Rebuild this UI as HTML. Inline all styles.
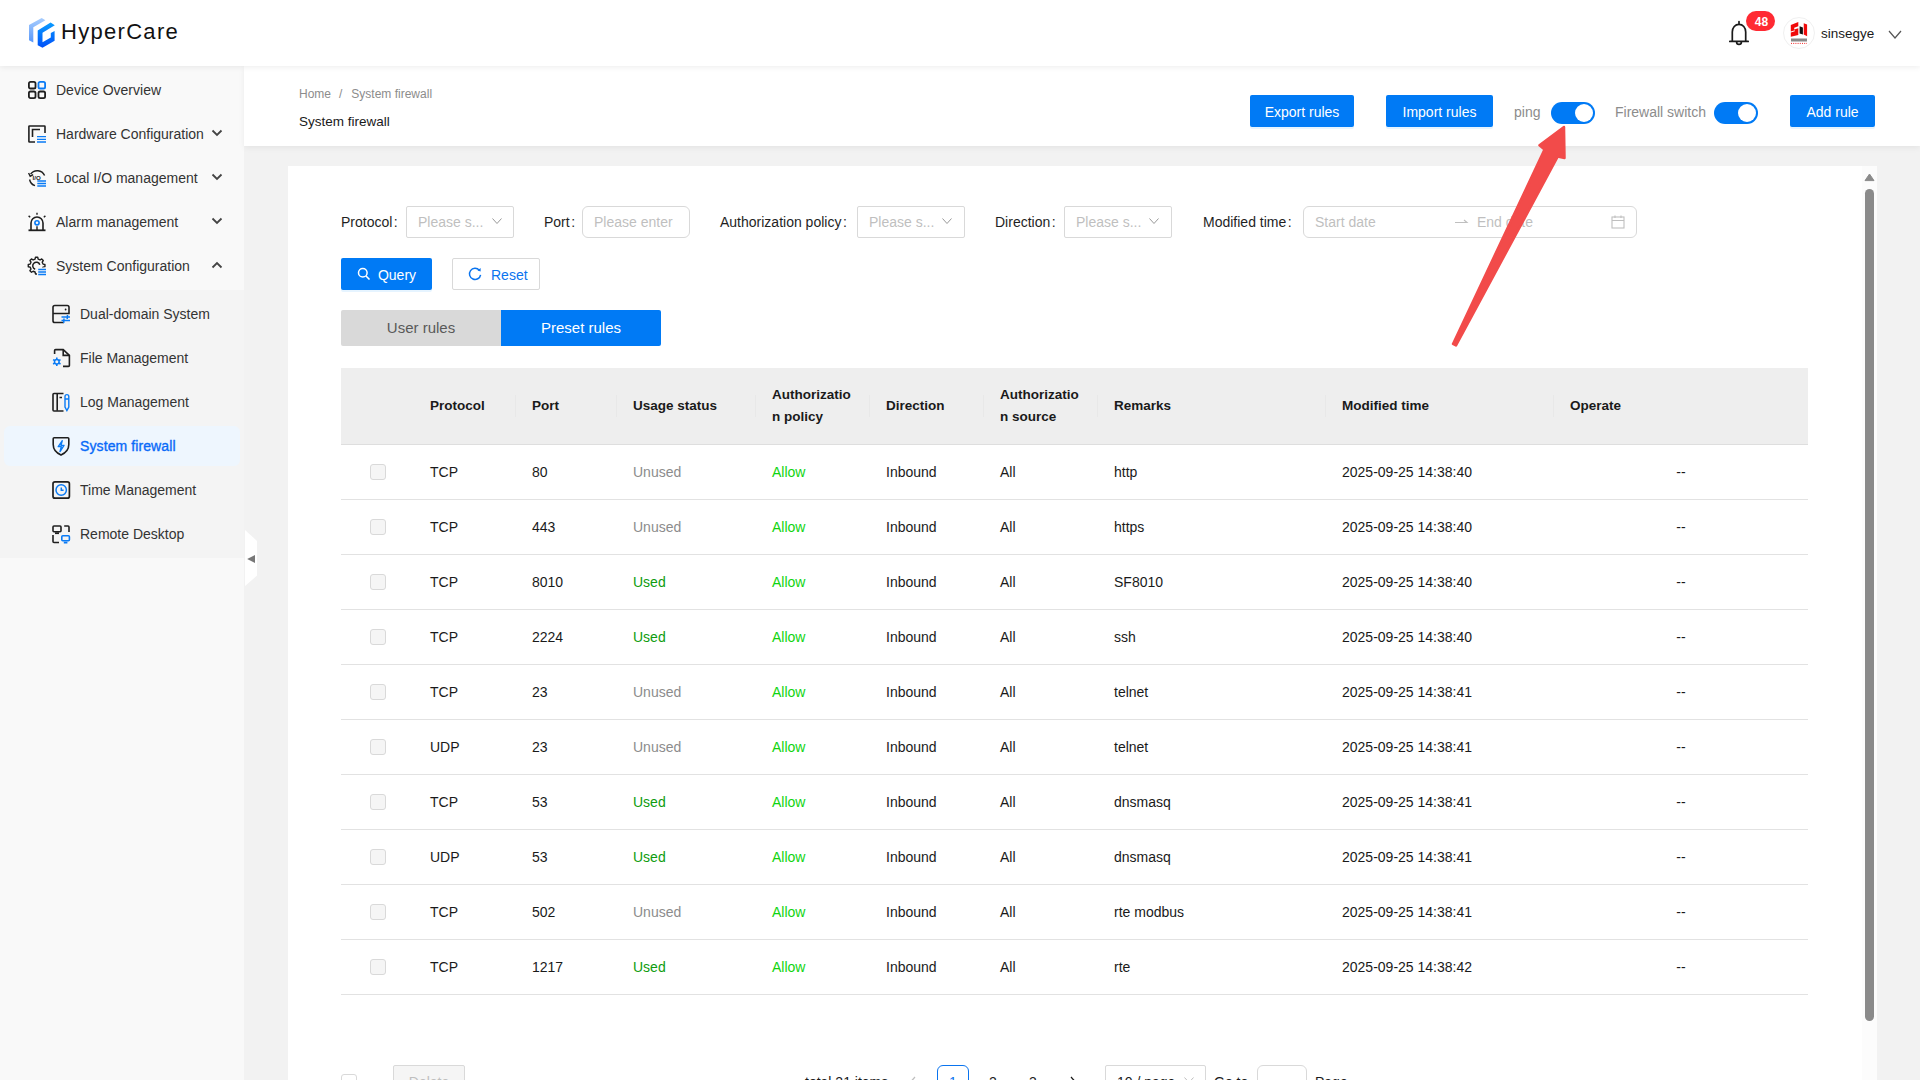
<!DOCTYPE html>
<html><head><meta charset="utf-8">
<style>
*{box-sizing:border-box;margin:0;padding:0}
html,body{width:1920px;height:1080px;overflow:hidden;background:#f2f2f2;font-family:"Liberation Sans",sans-serif;font-size:14px;color:#1f1f1f}
.abs{position:absolute}
#hdr{position:absolute;left:0;top:0;width:1920px;height:66px;background:#fff;box-shadow:0 1px 6px rgba(0,0,0,.08);z-index:5}
#side{position:absolute;left:0;top:66px;width:244px;height:1014px;background:#f9f9f9}
#sub{position:absolute;left:0;top:290px;width:244px;height:268px;background:#f4f4f4}
.mi{position:absolute;left:56px;height:20px;line-height:20px;font-size:14px;color:#333;white-space:nowrap}
.chev{position:absolute;left:211px;width:12px;height:8px}
#ph{position:absolute;left:244px;top:66px;width:1676px;height:80px;background:#fff;box-shadow:0 2px 6px rgba(0,0,0,.06);z-index:2}
#card{position:absolute;left:288px;top:166px;width:1588px;height:914px;background:#fff}
.btn{position:absolute;height:32px;line-height:34px;background:#007af5;color:#fff;text-align:center;border-radius:2px;font-size:14px;box-shadow:0 2px 0 rgba(5,145,255,.1)}
.lbl{position:absolute;height:20px;line-height:20px;color:#1f1f1f;white-space:nowrap}
.inp{position:absolute;height:32px;border:1px solid #d9d9d9;border-radius:2px;background:#fff;color:#bfbfbf;line-height:30px;padding-left:11px;white-space:nowrap}
.tog{position:absolute;width:44px;height:22px;border-radius:11px;background:#007af5}
.tog::after{content:"";position:absolute;right:2px;top:2px;width:18px;height:18px;border-radius:50%;background:#fff}
table{border-collapse:collapse}
.th{position:absolute;top:368px;height:76px;font-weight:bold;color:#1f1f1f;line-height:22px;display:flex;align-items:center}
.row{position:absolute;left:341px;width:1467px;height:55px;border-bottom:1px solid #e4e4e4}
.c{position:absolute;top:0;height:54px;line-height:54px;white-space:nowrap}
.cb{position:absolute;left:29px;top:19px;width:16px;height:16px;border:1px solid #d9d9d9;border-radius:3px;background:#f7f7f7}
</style></head><body>
<div id="hdr">
<svg class="abs" style="left:0;top:0" width="60" height="60" viewBox="0 0 60 60">
<defs><linearGradient id="lg1" x1="0" y1="0" x2="0" y2="1"><stop offset="0" stop-color="#a8cdfd"/><stop offset="1" stop-color="#5797fa"/></linearGradient>
<linearGradient id="lg2" x1="0" y1="0" x2="0" y2="1"><stop offset="0" stop-color="#0a9cff"/><stop offset="1" stop-color="#0050f8"/></linearGradient></defs>
<path d="M29,25 L41.7,18 L45.4,20.2 L33.3,27.3 L33.3,42.5 L29,40.3 Z" fill="url(#lg1)"/>
<path d="M37.7,30.4 L50.6,22.5 L54.8,25.2 L42.5,32.8 L42.5,42.3 L50.8,37.5 L50.8,32.9 L54.6,30.9 L54.6,40.8 L42.5,47.7 L37.7,45.2 Z" fill="url(#lg2)"/>
</svg>
<div class="abs" style="left:61px;top:17.7px;font-size:22px;line-height:28px;color:#111;letter-spacing:1.3px">HyperCare</div>
<svg class="abs" style="left:1726.5px;top:20px" width="24" height="28" viewBox="0 0 24 28"><path d="M12,1.5 L12,4 M5.3,21 L5.3,12 C5.3,7.5 8.2,4.3 12,4.3 C15.8,4.3 18.7,7.5 18.7,12 L18.7,21 M2.8,21.4 L21.2,21.4 M9.6,22 C9.6,25.2 14.4,25.2 14.4,22" fill="none" stroke="#1a1a1a" stroke-width="1.7" stroke-linecap="round"/></svg>
<div class="abs" style="left:1746px;top:11px;width:29px;height:20px;border-radius:10px;background:#ff2a33;color:#fff;font-size:12px;font-weight:bold;line-height:22px;text-align:center;padding-left:2px">48</div>
<div class="abs" style="left:1783px;top:17px;width:32px;height:32px;border-radius:50%;border:1px solid #f0f0f0;background:#fff"></div>
<svg class="abs" style="left:1790px;top:21px" width="18" height="24" viewBox="0 0 18 24"><path d="M0.8,4 L8.3,1.1 L8.3,5.3 L4.2,6.7 L4.2,8.4 L8.3,7.2 L8.3,13.9 L0.8,15.7 L0.8,11.4 L4.8,10.3 L4.8,9.2 L0.8,10.4 Z" fill="#f00a0a"/><path d="M9.6,5.2 L12.9,6.5 L12.9,13.6 L9.6,12.5 Z" fill="#111"/><path d="M13.75,2.3 L17.1,3.6 L17.1,15.25 L13.75,13.5 Z" fill="#f00a0a"/><rect x="1" y="17.5" width="16" height="3" fill="#555" opacity="0.7"/><path d="M1,22.4 L17,22.4" stroke="#f00a0a" stroke-width="0.9" stroke-dasharray="1,1.2"/></svg>
<div class="abs" style="left:1821px;top:24px;font-size:13.5px;line-height:20px;color:#1a1a1a">sinsegye</div>
<svg class="abs" style="left:1887px;top:29px" width="16" height="12" viewBox="0 0 16 12"><path d="M2,2 L8,9 L14,2" fill="none" stroke="#555" stroke-width="1.2"/></svg>
</div>
<div id="side"></div>
<div id="sub"></div>
<div class="abs" style="left:4px;top:426px;width:236px;height:40px;border-radius:6px;background:#eef6fe"></div>
<svg class="abs" style="left:27px;top:80px" width="20" height="20" viewBox="0 0 20 20" fill="none" stroke-width="1.8">
<rect x="1.9" y="1.9" width="6.6" height="6.6" rx="1.6" stroke="#1f1f1f"/><rect x="11.5" y="1.9" width="6.6" height="6.6" rx="1.6" stroke="#0a7bf5"/>
<rect x="1.9" y="11.5" width="6.6" height="6.6" rx="1.6" stroke="#1f1f1f"/><rect x="11.5" y="11.5" width="6.6" height="6.6" rx="1.6" stroke="#1f1f1f"/></svg>
<svg class="abs" style="left:27px;top:124px" width="20" height="20" viewBox="0 0 20 20" fill="none">
<path d="M8,18 L2.5,18 Q1.9,18 1.9,17.4 L1.9,2.6 Q1.9,2 2.5,2 L17.4,2 Q18,2 18,2.6 L18,9" stroke="#1f1f1f" stroke-width="1.6"/>
<path d="M5.5,13 L5.5,5.5 L13,5.5" stroke="#1f1f1f" stroke-width="1.6"/>
<path d="M10,12.6 L19,12.6 M10,15.3 L19,15.3 M10,18 L19,18" stroke="#0a7bf5" stroke-width="1.3"/></svg>
<svg class="abs" style="left:27px;top:168px" width="20" height="20" viewBox="0 0 20 20" fill="none">
<path d="M3.6,6.2 A8,8 0 0 1 17.6,7.6" stroke="#1f1f1f" stroke-width="1.4"/><path d="M1.6,5 L3.2,8.2 L6.2,6.6" stroke="#1f1f1f" stroke-width="1.4"/>
<path d="M2.6,11.5 A8,8 0 0 0 8,17.6" stroke="#1f1f1f" stroke-width="1.4"/>
<text x="5.6" y="11.8" font-size="6.2" font-family="Liberation Sans" font-weight="bold" fill="#1f1f1f">I/O</text>
<path d="M10.3,13 L19,13 M10.3,15.5 L19,15.5 M10.3,18 L19,18" stroke="#0a7bf5" stroke-width="1.3"/></svg>
<svg class="abs" style="left:27px;top:212px" width="20" height="20" viewBox="0 0 20 20" fill="none">
<path d="M4,18.2 L4,11 A6,6 0 0 1 16,11 L16,18.2" stroke="#1f1f1f" stroke-width="1.6"/><path d="M1.5,18.3 L18.5,18.3" stroke="#1f1f1f" stroke-width="1.8"/>
<path d="M10,0.8 L10,2.8 M1.6,3.9 L3.2,5.3 M18.4,3.9 L16.8,5.3 M10,14.2 L10,18" stroke="#1f1f1f" stroke-width="1.4"/>
<circle cx="10" cy="10.8" r="2.1" stroke="#0a7bf5" stroke-width="1.6"/></svg>
<svg class="abs" style="left:27px;top:256px" width="20" height="20" viewBox="0 0 20 20" fill="none">
<defs><mask id="gm"><rect x="0" y="0" width="20" height="20" fill="#fff"/><rect x="10" y="11.5" width="10" height="9" fill="#000"/></mask></defs>
<path mask="url(#gm)" d="M8.06,3.18 L8.48,1.27 L10.72,1.27 L11.14,3.18 L13.05,3.97 L14.70,2.92 L16.28,4.50 L15.23,6.15 L16.02,8.06 L17.93,8.48 L17.93,10.72 L16.02,11.14 L15.23,13.05 L16.28,14.70 L14.70,16.28 L13.05,15.23 L11.14,16.02 L10.72,17.93 L8.48,17.93 L8.06,16.02 L6.15,15.23 L4.50,16.28 L2.92,14.70 L3.97,13.05 L3.18,11.14 L1.27,10.72 L1.27,8.48 L3.18,8.06 L3.97,6.15 L2.92,4.50 L4.50,2.92 L6.15,3.97 Z" stroke="#1f1f1f" stroke-width="1.4" stroke-linejoin="round"/>
<path d="M8.2,13.2 A3.6,3.6 0 1 1 12.8,8.8" stroke="#1f1f1f" stroke-width="1.5"/>
<path d="M11.2,13.5 L19,13.5 M11.2,16 L19,16 M11.2,18.5 L19,18.5" stroke="#0a7bf5" stroke-width="1.3"/></svg>
<div class="mi" style="top:80px">Device Overview</div>
<div class="mi" style="top:124px">Hardware Configuration</div>
<svg class="abs" style="left:210px;top:128px" width="14" height="10" viewBox="0 0 14 10"><path d="M2.5,2.5 L7,7 L11.5,2.5" fill="none" stroke="#444" stroke-width="1.8"/></svg>
<div class="mi" style="top:168px">Local I/O management</div>
<svg class="abs" style="left:210px;top:172px" width="14" height="10" viewBox="0 0 14 10"><path d="M2.5,2.5 L7,7 L11.5,2.5" fill="none" stroke="#444" stroke-width="1.8"/></svg>
<div class="mi" style="top:212px">Alarm management</div>
<svg class="abs" style="left:210px;top:216px" width="14" height="10" viewBox="0 0 14 10"><path d="M2.5,2.5 L7,7 L11.5,2.5" fill="none" stroke="#444" stroke-width="1.8"/></svg>
<div class="mi" style="top:256px">System Configuration</div>
<svg class="abs" style="left:210px;top:260px" width="14" height="10" viewBox="0 0 14 10"><path d="M2.5,7.5 L7,3 L11.5,7.5" fill="none" stroke="#444" stroke-width="1.8"/></svg>
<svg class="abs" style="left:51px;top:304px" width="20" height="20" viewBox="0 0 20 20" fill="none">
<path d="M13,18.5 L3.8,18.5 Q2,18.5 2,16.7 L2,3.3 Q2,1.5 3.8,1.5 L16.2,1.5 Q18,1.5 18,3.3 L18,9.5 L2,9.5" stroke="#1f1f1f" stroke-width="1.6"/>
<circle cx="14.6" cy="5.5" r="0.9" fill="#1f1f1f"/>
<path d="M10.5,13 L19,13 M10.5,16.5 L19,16.5 M16.5,11 L16.2,15 M13,14.5 L12.7,19" stroke="#0a7bf5" stroke-width="1.5"/></svg>
<svg class="abs" style="left:51px;top:348px" width="20" height="20" viewBox="0 0 20 20" fill="none">
<path d="M3.6,6 L3.6,2.6 Q3.6,1.6 4.6,1.6 L12.2,1.6 L18.4,7.4 L18.4,17.4 Q18.4,18.4 17.4,18.4 L12,18.4" stroke="#1f1f1f" stroke-width="1.6"/>
<path d="M12.2,1.8 L12.2,7.4 L18.2,7.4" stroke="#1f1f1f" stroke-width="1.6"/>
<circle cx="5.8" cy="13.8" r="2.3" stroke="#0a7bf5" stroke-width="1.5"/>
<path d="M5.80,16.10 L5.80,18.10 M3.81,14.95 L2.08,15.95 M3.81,12.65 L2.08,11.65 M5.80,11.50 L5.80,9.50 M7.79,12.65 L9.52,11.65 M7.79,14.95 L9.52,15.95" stroke="#0a7bf5" stroke-width="1.6"/></svg>
<svg class="abs" style="left:51px;top:392px" width="20" height="20" viewBox="0 0 20 20" fill="none">
<path d="M12.5,19 L3,19 Q2,19 2,18 L2,2.5 Q2,1.5 3,1.5 L12.5,1.5" stroke="#1f1f1f" stroke-width="1.6"/>
<path d="M6.2,1.8 L6.2,18.8 M8.5,5.5 L11,5.5" stroke="#1f1f1f" stroke-width="1.6"/>
<path d="M14,4.5 A1.9,1.9 0 0 1 17.8,4.5 L17.8,15 L15.9,18.5 L14,15 Z M14,7 L17.8,7" stroke="#0a7bf5" stroke-width="1.4"/></svg>
<svg class="abs" style="left:51px;top:436px" width="20" height="20" viewBox="0 0 20 20" fill="none">
<path d="M2.2,2.8 Q2.2,1.8 3.2,1.8 L16.8,1.8 Q17.8,1.8 17.8,2.8 L17.8,8.5 Q17.8,15.5 10,19 Q2.2,15.5 2.2,8.5 Z" stroke="#1f1f1f" stroke-width="1.6"/>
<path d="M11.2,4.8 L7.2,10.6 L10.3,10.6 L9,15.6 L13,9.4 L10,9.4 Z" stroke="#0a7bf5" stroke-width="1.4" stroke-linejoin="round"/></svg>
<svg class="abs" style="left:51px;top:480px" width="20" height="20" viewBox="0 0 20 20" fill="none">
<rect x="2" y="1.8" width="16.4" height="16.4" rx="2" stroke="#1f1f1f" stroke-width="1.7"/>
<circle cx="10.2" cy="10" r="5.2" stroke="#0a7bf5" stroke-width="1.5"/>
<path d="M10.3,7.5 L10.3,10.2 L12.6,10.2" stroke="#0a7bf5" stroke-width="1.5"/></svg>
<svg class="abs" style="left:51px;top:524px" width="20" height="20" viewBox="0 0 20 20" fill="none">
<rect x="2" y="2" width="8" height="5.8" rx="1" stroke="#1f1f1f" stroke-width="1.6"/><path d="M4,9.2 L8,9.2" stroke="#1f1f1f" stroke-width="1.8"/>
<path d="M13.2,2 L17,2 Q18,2 18,3 L18,8" stroke="#1f1f1f" stroke-width="1.6"/>
<path d="M2,11 L2,17.5 Q2,18.5 3,18.5 L8,18.5" stroke="#1f1f1f" stroke-width="1.6"/>
<rect x="10.8" y="11.8" width="7.6" height="5" rx="1" stroke="#0a7bf5" stroke-width="1.6"/><path d="M12.8,18.6 L16.4,18.6" stroke="#0a7bf5" stroke-width="1.8"/></svg>
<div class="mi" style="left:80px;top:304px;color:#333">Dual-domain System</div>
<div class="mi" style="left:80px;top:348px;color:#333">File Management</div>
<div class="mi" style="left:80px;top:392px;color:#333">Log Management</div>
<div class="mi" style="left:80px;top:436px;color:#0a6af8;-webkit-text-stroke:0.35px #0a6af8;letter-spacing:0.1px">System firewall</div>
<div class="mi" style="left:80px;top:480px;color:#333">Time Management</div>
<div class="mi" style="left:80px;top:524px;color:#333">Remote Desktop</div>
<svg class="abs" style="left:244px;top:530px" width="14" height="57" viewBox="0 0 14 57"><path d="M1,0 L13,11 L13,45.5 L1,56 Z" fill="#fff"/><path d="M3.2,29 L11,25 L11,33 Z" fill="#777"/></svg>
<div id="ph">
<div class="abs" style="left:55px;top:20px;font-size:12px;line-height:16px;color:#8c8c8c;white-space:nowrap">Home<span style="margin:0 9px 0 8px">/</span>System firewall</div>
<div class="abs" style="left:55px;top:46px;font-size:13.5px;line-height:20px;color:#1a1a1a;white-space:nowrap">System firewall</div>
<div class="btn" style="left:1006px;top:29px;width:104px">Export rules</div>
<div class="btn" style="left:1142px;top:29px;width:107px">Import rules</div>
<div class="abs" style="left:1270px;top:36px;line-height:20px;color:#8c8c8c">ping</div>
<div class="tog" style="left:1307px;top:36px"></div>
<div class="abs" style="left:1371px;top:36px;line-height:20px;color:#8c8c8c;white-space:nowrap">Firewall switch</div>
<div class="tog" style="left:1470px;top:36px"></div>
<div class="btn" style="left:1546px;top:29px;width:85px">Add rule</div>
</div>
<div id="card"></div>
<div class="lbl" style="left:341px;top:212px">Protocol<span style="margin-left:1.5px">:</span></div>
<div class="inp" style="left:406px;top:206px;width:108px">Please s...</div><svg class="abs" style="left:491px;top:215px" width="12" height="12" viewBox="0 0 12 12"><path d="M1.5,3.5 L6,8.5 L10.5,3.5" fill="none" stroke="#999" stroke-width="1"/></svg>
<div class="lbl" style="left:544px;top:212px">Port<span style="margin-left:1.5px">:</span></div>
<div class="inp" style="left:582px;top:206px;width:108px;border-radius:6px">Please enter</div>
<div class="lbl" style="left:720px;top:212px">Authorization policy<span style="margin-left:1.5px">:</span></div>
<div class="inp" style="left:857px;top:206px;width:108px">Please s...</div><svg class="abs" style="left:941px;top:215px" width="12" height="12" viewBox="0 0 12 12"><path d="M1.5,3.5 L6,8.5 L10.5,3.5" fill="none" stroke="#999" stroke-width="1"/></svg>
<div class="lbl" style="left:995px;top:212px">Direction<span style="margin-left:1.5px">:</span></div>
<div class="inp" style="left:1064px;top:206px;width:108px">Please s...</div><svg class="abs" style="left:1148px;top:215px" width="12" height="12" viewBox="0 0 12 12"><path d="M1.5,3.5 L6,8.5 L10.5,3.5" fill="none" stroke="#999" stroke-width="1"/></svg>
<div class="lbl" style="left:1203px;top:212px">Modified time<span style="margin-left:1.5px">:</span></div>
<div class="inp" style="left:1303px;top:206px;width:334px;border-radius:6px">Start date</div>
<div class="abs" style="left:1477px;top:212px;line-height:20px;color:#bfbfbf">End date</div>
<svg class="abs" style="left:1453px;top:216px" width="16" height="12" viewBox="0 0 16 12"><path d="M2,6.5 L14,6.5 L11,4" fill="none" stroke="#bfbfbf" stroke-width="1.1"/></svg>
<svg class="abs" style="left:1610px;top:214px" width="16" height="16" viewBox="0 0 16 16"><rect x="2" y="3" width="12" height="11" fill="none" stroke="#bfbfbf" stroke-width="1.1"/><path d="M2,6.5 L14,6.5 M5,1.5 L5,4 M11,1.5 L11,4" stroke="#bfbfbf" stroke-width="1.1"/></svg>
<div class="btn" style="left:341px;top:258px;width:91px;line-height:34px"><span style="margin-left:21px">Query</span></div>
<svg class="abs" style="left:356px;top:266px" width="16" height="16" viewBox="0 0 16 16"><circle cx="6.8" cy="6.8" r="4.3" fill="none" stroke="#fff" stroke-width="1.5"/><path d="M10,10 L13.5,13.5" stroke="#fff" stroke-width="1.6"/></svg>
<div class="abs" style="left:452px;top:258px;width:88px;height:32px;border:1px solid #d9d9d9;border-radius:2px;background:#fff;color:#0a74ef;line-height:32px"><span style="margin-left:38px">Reset</span></div>
<svg class="abs" style="left:467px;top:266px" width="16" height="16" viewBox="0 0 16 16"><path d="M12.3,4.2 A5.6,5.6 0 1 0 13.6,8.8" fill="none" stroke="#0a74ef" stroke-width="1.5"/><path d="M13.2,1.8 L13.2,5.3 L9.7,5.3" fill="none" stroke="#0a74ef" stroke-width="0"/><path d="M10.5,4.6 L13.6,5.4 L13.6,2" fill="#0a74ef"/></svg>
<div class="abs" style="left:341px;top:310px;width:160px;height:36px;background:#d9d9d9;border-radius:2px 0 0 2px;color:#595959;font-size:15px;line-height:36px;text-align:center">User rules</div>
<div class="abs" style="left:501px;top:310px;width:160px;height:36px;background:#007af5;border-radius:0 2px 2px 0;color:#fff;font-size:15px;line-height:36px;text-align:center">Preset rules</div>

<div class="abs" style="left:341px;top:368px;width:1467px;height:77px;background:#eeeeee;border-bottom:1px solid #dedede"></div>
<div class="abs" style="left:514.5px;top:395px;width:1px;height:22px;background:#e8e8e8"></div>
<div class="abs" style="left:616px;top:395px;width:1px;height:22px;background:#e8e8e8"></div>
<div class="abs" style="left:755px;top:395px;width:1px;height:22px;background:#e8e8e8"></div>
<div class="abs" style="left:869px;top:395px;width:1px;height:22px;background:#e8e8e8"></div>
<div class="abs" style="left:983px;top:395px;width:1px;height:22px;background:#e8e8e8"></div>
<div class="abs" style="left:1097px;top:395px;width:1px;height:22px;background:#e8e8e8"></div>
<div class="abs" style="left:1325px;top:395px;width:1px;height:22px;background:#e8e8e8"></div>
<div class="abs" style="left:1553px;top:395px;width:1px;height:22px;background:#e8e8e8"></div>
<div class="abs" style="left:430px;top:395px;font-weight:bold;font-size:13.5px;line-height:22px;color:#1a1a1a;white-space:nowrap">Protocol</div>
<div class="abs" style="left:532px;top:395px;font-weight:bold;font-size:13.5px;line-height:22px;color:#1a1a1a;white-space:nowrap">Port</div>
<div class="abs" style="left:633px;top:395px;font-weight:bold;font-size:13.5px;line-height:22px;color:#1a1a1a;white-space:nowrap">Usage status</div>
<div class="abs" style="left:772px;top:384px;font-weight:bold;font-size:13.5px;line-height:22px;color:#1a1a1a;white-space:nowrap">Authorizatio<br>n policy</div>
<div class="abs" style="left:886px;top:395px;font-weight:bold;font-size:13.5px;line-height:22px;color:#1a1a1a;white-space:nowrap">Direction</div>
<div class="abs" style="left:1000px;top:384px;font-weight:bold;font-size:13.5px;line-height:22px;color:#1a1a1a;white-space:nowrap">Authorizatio<br>n source</div>
<div class="abs" style="left:1114px;top:395px;font-weight:bold;font-size:13.5px;line-height:22px;color:#1a1a1a;white-space:nowrap">Remarks</div>
<div class="abs" style="left:1342px;top:395px;font-weight:bold;font-size:13.5px;line-height:22px;color:#1a1a1a;white-space:nowrap">Modified time</div>
<div class="abs" style="left:1570px;top:395px;font-weight:bold;font-size:13.5px;line-height:22px;color:#1a1a1a;white-space:nowrap">Operate</div>
<div class="abs" style="left:341px;top:445px;width:1467px;height:55px;border-bottom:1px solid #e2e2e2"></div>
<div class="abs" style="left:370px;top:464px;width:16px;height:16px;border:1px solid #d9d9d9;border-radius:3px;background:#f5f5f5"></div>
<div class="abs" style="left:430px;top:462px;line-height:20px;color:#1a1a1a;white-space:nowrap">TCP</div>
<div class="abs" style="left:532px;top:462px;line-height:20px;color:#1a1a1a;white-space:nowrap">80</div>
<div class="abs" style="left:633px;top:462px;line-height:20px;color:#8c8c8c;white-space:nowrap">Unused</div>
<div class="abs" style="left:772px;top:462px;line-height:20px;color:#10d410;white-space:nowrap">Allow</div>
<div class="abs" style="left:886px;top:462px;line-height:20px;color:#1a1a1a;white-space:nowrap">Inbound</div>
<div class="abs" style="left:1000px;top:462px;line-height:20px;color:#1a1a1a;white-space:nowrap">All</div>
<div class="abs" style="left:1114px;top:462px;line-height:20px;color:#1a1a1a;white-space:nowrap">http</div>
<div class="abs" style="left:1342px;top:462px;line-height:20px;color:#1a1a1a;white-space:nowrap">2025-09-25 14:38:40</div>
<div class="abs" style="left:1554px;top:462px;width:254px;text-align:center;line-height:20px;color:#1a1a1a">--</div>
<div class="abs" style="left:341px;top:500px;width:1467px;height:55px;border-bottom:1px solid #e2e2e2"></div>
<div class="abs" style="left:370px;top:519px;width:16px;height:16px;border:1px solid #d9d9d9;border-radius:3px;background:#f5f5f5"></div>
<div class="abs" style="left:430px;top:517px;line-height:20px;color:#1a1a1a;white-space:nowrap">TCP</div>
<div class="abs" style="left:532px;top:517px;line-height:20px;color:#1a1a1a;white-space:nowrap">443</div>
<div class="abs" style="left:633px;top:517px;line-height:20px;color:#8c8c8c;white-space:nowrap">Unused</div>
<div class="abs" style="left:772px;top:517px;line-height:20px;color:#10d410;white-space:nowrap">Allow</div>
<div class="abs" style="left:886px;top:517px;line-height:20px;color:#1a1a1a;white-space:nowrap">Inbound</div>
<div class="abs" style="left:1000px;top:517px;line-height:20px;color:#1a1a1a;white-space:nowrap">All</div>
<div class="abs" style="left:1114px;top:517px;line-height:20px;color:#1a1a1a;white-space:nowrap">https</div>
<div class="abs" style="left:1342px;top:517px;line-height:20px;color:#1a1a1a;white-space:nowrap">2025-09-25 14:38:40</div>
<div class="abs" style="left:1554px;top:517px;width:254px;text-align:center;line-height:20px;color:#1a1a1a">--</div>
<div class="abs" style="left:341px;top:555px;width:1467px;height:55px;border-bottom:1px solid #e2e2e2"></div>
<div class="abs" style="left:370px;top:574px;width:16px;height:16px;border:1px solid #d9d9d9;border-radius:3px;background:#f5f5f5"></div>
<div class="abs" style="left:430px;top:572px;line-height:20px;color:#1a1a1a;white-space:nowrap">TCP</div>
<div class="abs" style="left:532px;top:572px;line-height:20px;color:#1a1a1a;white-space:nowrap">8010</div>
<div class="abs" style="left:633px;top:572px;line-height:20px;color:#0e9c0e;white-space:nowrap">Used</div>
<div class="abs" style="left:772px;top:572px;line-height:20px;color:#10d410;white-space:nowrap">Allow</div>
<div class="abs" style="left:886px;top:572px;line-height:20px;color:#1a1a1a;white-space:nowrap">Inbound</div>
<div class="abs" style="left:1000px;top:572px;line-height:20px;color:#1a1a1a;white-space:nowrap">All</div>
<div class="abs" style="left:1114px;top:572px;line-height:20px;color:#1a1a1a;white-space:nowrap">SF8010</div>
<div class="abs" style="left:1342px;top:572px;line-height:20px;color:#1a1a1a;white-space:nowrap">2025-09-25 14:38:40</div>
<div class="abs" style="left:1554px;top:572px;width:254px;text-align:center;line-height:20px;color:#1a1a1a">--</div>
<div class="abs" style="left:341px;top:610px;width:1467px;height:55px;border-bottom:1px solid #e2e2e2"></div>
<div class="abs" style="left:370px;top:629px;width:16px;height:16px;border:1px solid #d9d9d9;border-radius:3px;background:#f5f5f5"></div>
<div class="abs" style="left:430px;top:627px;line-height:20px;color:#1a1a1a;white-space:nowrap">TCP</div>
<div class="abs" style="left:532px;top:627px;line-height:20px;color:#1a1a1a;white-space:nowrap">2224</div>
<div class="abs" style="left:633px;top:627px;line-height:20px;color:#0e9c0e;white-space:nowrap">Used</div>
<div class="abs" style="left:772px;top:627px;line-height:20px;color:#10d410;white-space:nowrap">Allow</div>
<div class="abs" style="left:886px;top:627px;line-height:20px;color:#1a1a1a;white-space:nowrap">Inbound</div>
<div class="abs" style="left:1000px;top:627px;line-height:20px;color:#1a1a1a;white-space:nowrap">All</div>
<div class="abs" style="left:1114px;top:627px;line-height:20px;color:#1a1a1a;white-space:nowrap">ssh</div>
<div class="abs" style="left:1342px;top:627px;line-height:20px;color:#1a1a1a;white-space:nowrap">2025-09-25 14:38:40</div>
<div class="abs" style="left:1554px;top:627px;width:254px;text-align:center;line-height:20px;color:#1a1a1a">--</div>
<div class="abs" style="left:341px;top:665px;width:1467px;height:55px;border-bottom:1px solid #e2e2e2"></div>
<div class="abs" style="left:370px;top:684px;width:16px;height:16px;border:1px solid #d9d9d9;border-radius:3px;background:#f5f5f5"></div>
<div class="abs" style="left:430px;top:682px;line-height:20px;color:#1a1a1a;white-space:nowrap">TCP</div>
<div class="abs" style="left:532px;top:682px;line-height:20px;color:#1a1a1a;white-space:nowrap">23</div>
<div class="abs" style="left:633px;top:682px;line-height:20px;color:#8c8c8c;white-space:nowrap">Unused</div>
<div class="abs" style="left:772px;top:682px;line-height:20px;color:#10d410;white-space:nowrap">Allow</div>
<div class="abs" style="left:886px;top:682px;line-height:20px;color:#1a1a1a;white-space:nowrap">Inbound</div>
<div class="abs" style="left:1000px;top:682px;line-height:20px;color:#1a1a1a;white-space:nowrap">All</div>
<div class="abs" style="left:1114px;top:682px;line-height:20px;color:#1a1a1a;white-space:nowrap">telnet</div>
<div class="abs" style="left:1342px;top:682px;line-height:20px;color:#1a1a1a;white-space:nowrap">2025-09-25 14:38:41</div>
<div class="abs" style="left:1554px;top:682px;width:254px;text-align:center;line-height:20px;color:#1a1a1a">--</div>
<div class="abs" style="left:341px;top:720px;width:1467px;height:55px;border-bottom:1px solid #e2e2e2"></div>
<div class="abs" style="left:370px;top:739px;width:16px;height:16px;border:1px solid #d9d9d9;border-radius:3px;background:#f5f5f5"></div>
<div class="abs" style="left:430px;top:737px;line-height:20px;color:#1a1a1a;white-space:nowrap">UDP</div>
<div class="abs" style="left:532px;top:737px;line-height:20px;color:#1a1a1a;white-space:nowrap">23</div>
<div class="abs" style="left:633px;top:737px;line-height:20px;color:#8c8c8c;white-space:nowrap">Unused</div>
<div class="abs" style="left:772px;top:737px;line-height:20px;color:#10d410;white-space:nowrap">Allow</div>
<div class="abs" style="left:886px;top:737px;line-height:20px;color:#1a1a1a;white-space:nowrap">Inbound</div>
<div class="abs" style="left:1000px;top:737px;line-height:20px;color:#1a1a1a;white-space:nowrap">All</div>
<div class="abs" style="left:1114px;top:737px;line-height:20px;color:#1a1a1a;white-space:nowrap">telnet</div>
<div class="abs" style="left:1342px;top:737px;line-height:20px;color:#1a1a1a;white-space:nowrap">2025-09-25 14:38:41</div>
<div class="abs" style="left:1554px;top:737px;width:254px;text-align:center;line-height:20px;color:#1a1a1a">--</div>
<div class="abs" style="left:341px;top:775px;width:1467px;height:55px;border-bottom:1px solid #e2e2e2"></div>
<div class="abs" style="left:370px;top:794px;width:16px;height:16px;border:1px solid #d9d9d9;border-radius:3px;background:#f5f5f5"></div>
<div class="abs" style="left:430px;top:792px;line-height:20px;color:#1a1a1a;white-space:nowrap">TCP</div>
<div class="abs" style="left:532px;top:792px;line-height:20px;color:#1a1a1a;white-space:nowrap">53</div>
<div class="abs" style="left:633px;top:792px;line-height:20px;color:#0e9c0e;white-space:nowrap">Used</div>
<div class="abs" style="left:772px;top:792px;line-height:20px;color:#10d410;white-space:nowrap">Allow</div>
<div class="abs" style="left:886px;top:792px;line-height:20px;color:#1a1a1a;white-space:nowrap">Inbound</div>
<div class="abs" style="left:1000px;top:792px;line-height:20px;color:#1a1a1a;white-space:nowrap">All</div>
<div class="abs" style="left:1114px;top:792px;line-height:20px;color:#1a1a1a;white-space:nowrap">dnsmasq</div>
<div class="abs" style="left:1342px;top:792px;line-height:20px;color:#1a1a1a;white-space:nowrap">2025-09-25 14:38:41</div>
<div class="abs" style="left:1554px;top:792px;width:254px;text-align:center;line-height:20px;color:#1a1a1a">--</div>
<div class="abs" style="left:341px;top:830px;width:1467px;height:55px;border-bottom:1px solid #e2e2e2"></div>
<div class="abs" style="left:370px;top:849px;width:16px;height:16px;border:1px solid #d9d9d9;border-radius:3px;background:#f5f5f5"></div>
<div class="abs" style="left:430px;top:847px;line-height:20px;color:#1a1a1a;white-space:nowrap">UDP</div>
<div class="abs" style="left:532px;top:847px;line-height:20px;color:#1a1a1a;white-space:nowrap">53</div>
<div class="abs" style="left:633px;top:847px;line-height:20px;color:#0e9c0e;white-space:nowrap">Used</div>
<div class="abs" style="left:772px;top:847px;line-height:20px;color:#10d410;white-space:nowrap">Allow</div>
<div class="abs" style="left:886px;top:847px;line-height:20px;color:#1a1a1a;white-space:nowrap">Inbound</div>
<div class="abs" style="left:1000px;top:847px;line-height:20px;color:#1a1a1a;white-space:nowrap">All</div>
<div class="abs" style="left:1114px;top:847px;line-height:20px;color:#1a1a1a;white-space:nowrap">dnsmasq</div>
<div class="abs" style="left:1342px;top:847px;line-height:20px;color:#1a1a1a;white-space:nowrap">2025-09-25 14:38:41</div>
<div class="abs" style="left:1554px;top:847px;width:254px;text-align:center;line-height:20px;color:#1a1a1a">--</div>
<div class="abs" style="left:341px;top:885px;width:1467px;height:55px;border-bottom:1px solid #e2e2e2"></div>
<div class="abs" style="left:370px;top:904px;width:16px;height:16px;border:1px solid #d9d9d9;border-radius:3px;background:#f5f5f5"></div>
<div class="abs" style="left:430px;top:902px;line-height:20px;color:#1a1a1a;white-space:nowrap">TCP</div>
<div class="abs" style="left:532px;top:902px;line-height:20px;color:#1a1a1a;white-space:nowrap">502</div>
<div class="abs" style="left:633px;top:902px;line-height:20px;color:#8c8c8c;white-space:nowrap">Unused</div>
<div class="abs" style="left:772px;top:902px;line-height:20px;color:#10d410;white-space:nowrap">Allow</div>
<div class="abs" style="left:886px;top:902px;line-height:20px;color:#1a1a1a;white-space:nowrap">Inbound</div>
<div class="abs" style="left:1000px;top:902px;line-height:20px;color:#1a1a1a;white-space:nowrap">All</div>
<div class="abs" style="left:1114px;top:902px;line-height:20px;color:#1a1a1a;white-space:nowrap">rte modbus</div>
<div class="abs" style="left:1342px;top:902px;line-height:20px;color:#1a1a1a;white-space:nowrap">2025-09-25 14:38:41</div>
<div class="abs" style="left:1554px;top:902px;width:254px;text-align:center;line-height:20px;color:#1a1a1a">--</div>
<div class="abs" style="left:341px;top:940px;width:1467px;height:55px;border-bottom:1px solid #e2e2e2"></div>
<div class="abs" style="left:370px;top:959px;width:16px;height:16px;border:1px solid #d9d9d9;border-radius:3px;background:#f5f5f5"></div>
<div class="abs" style="left:430px;top:957px;line-height:20px;color:#1a1a1a;white-space:nowrap">TCP</div>
<div class="abs" style="left:532px;top:957px;line-height:20px;color:#1a1a1a;white-space:nowrap">1217</div>
<div class="abs" style="left:633px;top:957px;line-height:20px;color:#0e9c0e;white-space:nowrap">Used</div>
<div class="abs" style="left:772px;top:957px;line-height:20px;color:#10d410;white-space:nowrap">Allow</div>
<div class="abs" style="left:886px;top:957px;line-height:20px;color:#1a1a1a;white-space:nowrap">Inbound</div>
<div class="abs" style="left:1000px;top:957px;line-height:20px;color:#1a1a1a;white-space:nowrap">All</div>
<div class="abs" style="left:1114px;top:957px;line-height:20px;color:#1a1a1a;white-space:nowrap">rte</div>
<div class="abs" style="left:1342px;top:957px;line-height:20px;color:#1a1a1a;white-space:nowrap">2025-09-25 14:38:42</div>
<div class="abs" style="left:1554px;top:957px;width:254px;text-align:center;line-height:20px;color:#1a1a1a">--</div>
<div class="abs" style="left:341px;top:1074px;width:16px;height:16px;border:1px solid #d9d9d9;border-radius:3px;background:#fff"></div>
<div class="abs" style="left:393px;top:1065px;width:72px;height:32px;border:1px solid #d9d9d9;border-radius:2px;background:#f5f5f5;color:#bfbfbf;line-height:32.5px;text-align:center">Delete</div>
<div class="abs" style="left:805px;top:1072px;line-height:20px;color:#1a1a1a;white-space:nowrap">total 21 items</div>
<svg class="abs" style="left:906px;top:1075px" width="14" height="14" viewBox="0 0 14 14"><path d="M9,2 L4.5,7 L9,12" fill="none" stroke="#bfbfbf" stroke-width="1.2"/></svg>
<div class="abs" style="left:937px;top:1065px;width:32px;height:32px;border:1px solid #0a74ef;border-radius:6px;color:#0a74ef;line-height:32px;text-align:center">1</div>
<div class="abs" style="left:977px;top:1065px;width:32px;height:32px;line-height:34px;text-align:center;color:#1a1a1a">2</div>
<div class="abs" style="left:1017px;top:1065px;width:32px;height:32px;line-height:34px;text-align:center;color:#1a1a1a">3</div>
<svg class="abs" style="left:1066px;top:1075px" width="14" height="14" viewBox="0 0 14 14"><path d="M5,2 L9.5,7 L5,12" fill="none" stroke="#1a1a1a" stroke-width="1.2"/></svg>
<div class="abs" style="left:1105px;top:1065px;width:101px;height:32px;border:1px solid #d9d9d9;border-radius:2px;background:#fff;color:#1a1a1a;line-height:32px;padding-left:11px;white-space:nowrap">10 / page</div>
<svg class="abs" style="left:1183px;top:1074px" width="12" height="12" viewBox="0 0 12 12"><path d="M1.5,3.5 L6,8.5 L10.5,3.5" fill="none" stroke="#bfbfbf" stroke-width="1"/></svg>
<div class="abs" style="left:1214px;top:1072px;line-height:20px;color:#1a1a1a;white-space:nowrap">Go to</div>
<div class="abs" style="left:1257px;top:1065px;width:50px;height:32px;border:1px solid #d9d9d9;border-radius:6px;background:#fff"></div>
<div class="abs" style="left:1315px;top:1072px;line-height:20px;color:#1a1a1a;white-space:nowrap">Page</div>
<div class="abs" style="left:1862px;top:166px;width:15px;height:914px;background:#fcfcfc"></div>
<svg class="abs" style="left:1864px;top:172px" width="11" height="10" viewBox="0 0 11 10"><path d="M5.5,2 L10,8.6 L1,8.6 Z" fill="#8a8a8a" stroke="#8a8a8a" stroke-width="1" stroke-linejoin="round"/></svg>
<div class="abs" style="left:1865px;top:189px;width:9px;height:832px;border-radius:4.5px;background:#8a8a8a"></div>
<svg class="abs" style="left:0;top:0;z-index:10" width="1920" height="1080" viewBox="0 0 1920 1080"><path d="M1564,127 L1539.5,145.3 L1544.5,149.5 L1453,344 L1456,345.5 L1557.8,156.5 L1564.5,158 Z" fill="#f24b4a" stroke="#f24b4a" stroke-width="2.5" stroke-linejoin="round"/></svg>
</body></html>
